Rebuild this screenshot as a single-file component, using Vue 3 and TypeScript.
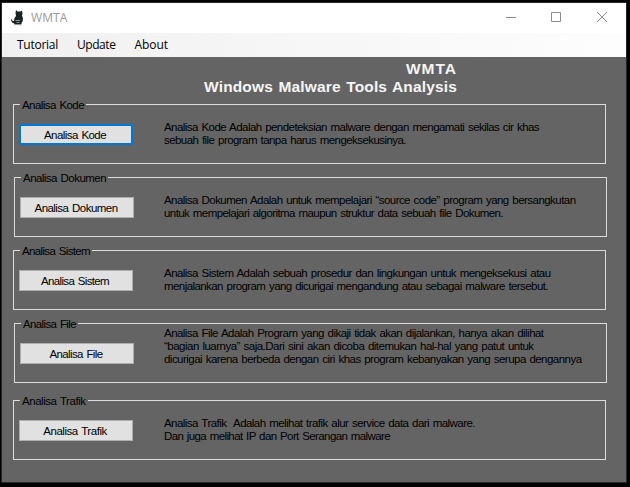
<script setup lang="ts">
interface Line {
  text: string
  width: number
}
interface Group {
  title: string
  titleWidth: number
  lines: Line[]
  focused?: boolean
  shifted?: boolean
  raised?: boolean
}

const menu: Line[] = [
  { text: 'Tutorial', width: 41 },
  { text: 'Update', width: 38.5 },
  { text: 'About', width: 33.5 },
]

const heading: Line[] = [
  { text: 'WMTA', width: 51 },
  { text: 'Windows Malware Tools Analysis', width: 253 },
]

const groups: Group[] = [
  {
    title: 'Analisa Kode',
    titleWidth: 62,
    focused: true,
    lines: [
      { text: 'Analisa Kode Adalah pendeteksian malware dengan mengamati sekilas cir khas', width: 375 },
      { text: 'sebuah file program tanpa harus mengeksekusinya.', width: 242 },
    ],
  },
  {
    title: 'Analisa Dokumen',
    titleWidth: 83,
    shifted: true,
    lines: [
      { text: 'Analisa Dokumen Adalah untuk mempelajari “source code” program yang bersangkutan', width: 411.5 },
      { text: 'untuk mempelajari algoritma maupun struktur data sebuah file Dokumen.', width: 339 },
    ],
  },
  {
    title: 'Analisa Sistem',
    titleWidth: 68,
    lines: [
      { text: 'Analisa Sistem Adalah sebuah prosedur dan lingkungan untuk mengeksekusi atau', width: 386.5 },
      { text: 'menjalankan program yang dicurigai mengandung atau sebagai malware tersebut.', width: 384 },
    ],
  },
  {
    title: 'Analisa File',
    titleWidth: 53,
    shifted: true,
    raised: true,
    lines: [
      { text: 'Analisa File Adalah Program yang dikaji tidak akan dijalankan, hanya akan dilihat', width: 379.5 },
      { text: '“bagian luarnya” saja.Dari sini akan dicoba ditemukan hal-hal yang patut untuk', width: 369.5 },
      { text: 'dicurigai karena berbeda dengan ciri khas program kebanyakan yang serupa dengannya', width: 417.5 },
    ],
  },
  {
    title: 'Analisa Trafik',
    titleWidth: 63.5,
    lines: [
      { text: 'Analisa Trafik  Adalah melihat trafik alur service data dari malware.', width: 311 },
      { text: 'Dan juga melihat IP dan Port Serangan malware', width: 226 },
    ],
  },
]

// Tracks the letters of a label so that it fills the given width.
const vFit = {
  mounted(el: HTMLElement, binding: { value: number }) {
    const natural = el.getBoundingClientRect().width
    const count = (el.textContent ?? '').length
    const gap = (binding.value - natural) / count
    el.style.letterSpacing = `${gap}px`
  },
}
</script>

<template>
  <div class="screen">
    <div class="window">
      <header class="titlebar">
        <svg class="logo" width="14" height="16" viewBox="0 0 14 16">
          <path
            d="M5 0l1.500 1.500h3L11 .5l.5 3-.5 2 1 3-.5 3-1 1.500v1.500H4L2.500 13 1 12.500 0 10l.5-1.500 1 2.500h1.500L3.500 8 5 6 4.500 3z"
            fill="#1c2124"
          />
          <path d="M4.500 10.500h4.500M5.500 12.500h3" stroke="#889094" stroke-width="1" />
          <path d="M3 15h1M6 15h1M9 15h1" stroke="#a9b4ba" stroke-width="1" />
        </svg>
        <span v-fit="36.5" class="caption">WMTA</span>
        <svg class="controls" width="102" height="12" viewBox="0 0 102 12" fill="none" stroke="#8c8c8c">
          <path d="M0 6.500h10M45.500 1.500h9v9h-9z" />
          <path d="M91 1l10 10M101 1L91 11" />
        </svg>
      </header>
      <nav class="menu">
        <span v-for="m in menu" :key="m.text" v-fit="m.width" class="menu-item">{{ m.text }}</span>
      </nav>
      <main class="body">
        <h1 class="heading">
          <span v-for="h in heading" :key="h.text" v-fit="h.width" class="line">{{ h.text }}</span>
        </h1>
        <section class="groups">
          <div v-for="g in groups" :key="g.title" class="group" :class="{ shifted: g.shifted, raised: g.raised }">
            <div class="legend"><span v-fit="g.titleWidth" class="line">{{ g.title }}</span></div>
            <button class="action" :class="{ focused: g.focused }">
              <span v-fit="g.titleWidth" class="line">{{ g.title }}</span>
            </button>
            <div class="description">
              <span v-for="l in g.lines" :key="l.text" v-fit="l.width" class="line">{{ l.text }}</span>
            </div>
          </div>
        </section>
      </main>
    </div>
  </div>
</template>

<style>
body {
  background: #000;
  overflow: hidden;
}
</style>

<style scoped>
.screen {
  box-sizing: border-box;
  width: 630px;
  height: 487px;
  padding: 2px 3px 4px 1px;
  background: #000;
  font-family: 'Liberation Sans', Arial, sans-serif;
}
.window {
  box-sizing: border-box;
  display: flex;
  flex-direction: column;
  height: 481px;
  border: 1px solid #272727;
}
.titlebar {
  display: flex;
  align-items: center;
  height: 30px;
  flex: none;
  padding: 0 18px 0 9px;
  background: #fff;
}
.logo {
  margin-top: -1px;
}
.caption {
  margin-left: 6px;
  font: 12px/16px 'Open Sans', 'Noto Sans', sans-serif;
  color: #999;
  white-space: pre;
}
.controls {
  margin-left: auto;
  margin-top: -2px;
}
.menu {
  display: flex;
  align-items: center;
  flex: none;
  gap: 19px;
  height: 24px;
  padding-left: 15px;
  background: linear-gradient(90deg, #f0f0f0, #fdfdfd);
  font: 12px/16px 'Open Sans', 'Noto Sans', sans-serif;
  color: #000;
}
.menu-item,
.line {
  white-space: pre;
}
.body {
  flex: 1;
  background: #646464;
}
.heading {
  display: flex;
  flex-direction: column;
  align-items: flex-end;
  width: 455px;
  margin: 0;
  padding-top: 3px;
  font-size: 15.5px;
  line-height: 18px;
  font-weight: bold;
  word-spacing: 1px;
  color: #f5f5f5;
}
.groups {
  display: flex;
  flex-direction: column;
  gap: 13px;
  padding: 8px 0 0 11px;
}
.group {
  position: relative;
  box-sizing: border-box;
  display: flex;
  align-items: flex-start;
  width: 593px;
  height: 60px;
  padding: 19px 0 0 5px;
  border: 1px solid #dcdcdc;
  font-size: 11.5px;
  line-height: 13px;
  word-spacing: 1px;
  color: #000;
}
.group:last-child {
  margin-top: 4px;
}
.group.shifted {
  margin-left: 1px;
}
.legend {
  position: absolute;
  top: -6px;
  left: 6px;
  display: flex;
  padding: 0 2px;
  background: #646464;
}
.action {
  box-sizing: border-box;
  display: flex;
  align-items: center;
  justify-content: center;
  width: 114px;
  height: 21px;
  padding: 2px 2px 0 0;
  border: 1px solid #adadad;
  border-radius: 0;
  background: #e1e1e1;
  font: inherit;
  word-spacing: inherit;
  color: #000;
}
.action.focused {
  border: 2px solid #0078d7;
}
.description {
  display: flex;
  flex-direction: column;
  align-items: flex-start;
  margin: -3px 0 0 31px;
}
.shifted .description {
  margin-left: 30px;
}
.raised .description {
  margin-top: -16px;
}
</style>
